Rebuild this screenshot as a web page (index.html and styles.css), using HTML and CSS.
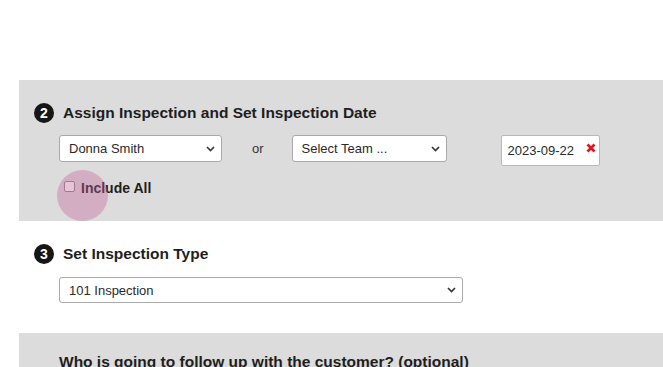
FILE: index.html
```html
<!DOCTYPE html>
<html>
<head>
<meta charset="utf-8">
<link rel="stylesheet" href="styles.css">
</head>
<body>
<div class="page">
  <section class="panel panel-gray panel-assign">
    <h2 class="step"><span class="badge">2</span>Assign Inspection and Set Inspection Date</h2>
    <div class="controls">
      <div class="select sel-person"><span>Donna Smith</span><svg class="chev" width="9" height="6" viewBox="0 0 9 6"><path d="M1 1l3.5 3.5L8 1" fill="none" stroke="#333" stroke-width="1.6"/></svg></div>
      <span class="or">or</span>
      <div class="select sel-team"><span>Select Team ...</span><svg class="chev" width="9" height="6" viewBox="0 0 9 6"><path d="M1 1l3.5 3.5L8 1" fill="none" stroke="#333" stroke-width="1.6"/></svg></div>
      <div class="date"><span>2023-09-22</span><svg class="clear" width="10" height="10" viewBox="0 0 10 10"><path d="M1.5 1.5l7 7M8.5 1.5l-7 7" stroke="#e8101a" stroke-width="2.6" stroke-linecap="butt"/></svg></div>
    </div>
    <label class="check"><span class="box"></span>Include All<span class="ripple"></span></label>
  </section>
  <section class="panel panel-type">
    <h2 class="step"><span class="badge">3</span>Set Inspection Type</h2>
    <div class="controls">
      <div class="select sel-type"><span>101 Inspection</span><svg class="chev" width="9" height="6" viewBox="0 0 9 6"><path d="M1 1l3.5 3.5L8 1" fill="none" stroke="#333" stroke-width="1.6"/></svg></div>
    </div>
  </section>
  <section class="panel panel-gray panel-follow">
    <h3 class="question">Who is going to follow up with the customer? (optional)</h3>
  </section>
</div>
</body>
</html>
```
FILE: styles.css
```css
html, body {
  margin: 0;
  padding: 0;
  background: #ffffff;
  overflow: hidden;
}
body {
  font-family: "Liberation Sans", Arial, sans-serif;
  color: #222;
}
.page {
  padding-top: 80px;
}
.panel {
  margin-left: 19px;
  padding-left: 15px;
}
.panel-gray {
  background: #dcdcdc;
}
.panel-assign {
  padding-top: 23px;
  padding-bottom: 24px;
}
.panel-type {
  padding-top: 23px;
  padding-bottom: 30px;
}
.panel-follow {
  padding-top: 20px;
  padding-left: 40px;
  height: 60px;
}
.step {
  display: flex;
  align-items: center;
  gap: 9px;
  margin: 0;
  font-size: 15.5px;
  font-weight: bold;
  line-height: 20px;
  color: #1e1e1e;
}
.badge {
  width: 20px;
  height: 20px;
  border-radius: 50%;
  background: #161616;
  color: #fff;
  font-size: 14px;
  font-weight: bold;
  display: flex;
  align-items: center;
  justify-content: center;
  line-height: 1;
}
.controls {
  display: flex;
  align-items: flex-start;
  margin-left: 25px;
  margin-top: 12px;
}
.panel-type .controls {
  margin-top: 13px;
}
.select {
  box-sizing: border-box;
  height: 27px;
  background: #fff;
  border: 1px solid #a9a9a9;
  border-radius: 3px;
  display: flex;
  align-items: center;
  justify-content: space-between;
  padding: 0 6px 0 9px;
  font-size: 13px;
  color: #2a2a2a;
}
.sel-person { width: 163px; }
.sel-team { width: 155px; }
.sel-type { width: 404px; height: 26px; }
.chev { display: block; }
.or {
  font-size: 13px;
  line-height: 27px;
  color: #333;
  margin: 0 28px 0 30px;
}
.date {
  box-sizing: border-box;
  width: 99px;
  height: 31px;
  margin-left: 54px;
  background: #fff;
  border: 1px solid #b8b8b8;
  border-radius: 2px;
  display: flex;
  align-items: center;
  justify-content: space-between;
  padding: 0 3px 1px 6px;
  font-size: 13px;
  color: #2a2a2a;
}
.date .clear {
  margin-top: -5px;
}
.check {
  position: relative;
  display: inline-flex;
  align-items: center;
  gap: 6px;
  margin-left: 30px;
  margin-top: 13px;
  font-size: 14px;
  font-weight: bold;
  line-height: 18px;
  color: #1e1e1e;
}
.box {
  box-sizing: border-box;
  width: 11px;
  height: 11px;
  background: #fff;
  border: 1px solid #8a8a8a;
  border-radius: 2px;
  margin-top: -4px;
}
.ripple {
  position: absolute;
  left: -7px;
  top: -9px;
  width: 51px;
  height: 51px;
  border-radius: 50%;
  background: rgba(196, 100, 155, 0.38);
  pointer-events: none;
}
.question {
  margin: 0;
  font-size: 15.5px;
  font-weight: bold;
  line-height: 18px;
  color: #1e1e1e;
}
```
